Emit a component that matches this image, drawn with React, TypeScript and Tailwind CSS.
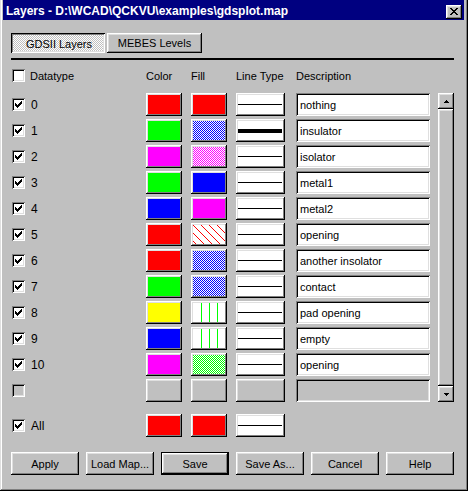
import React from "react";

const RAISED =
  "shadow-[inset_-1px_-1px_#000000,inset_1px_1px_#ffffff,inset_-2px_-2px_#808080,inset_2px_2px_#dfdfdf]";
const SUNKEN =
  "shadow-[inset_1px_1px_#808080,inset_-1px_-1px_#ffffff,inset_2px_2px_#000000,inset_-2px_-2px_#dfdfdf]";
const PRESSED =
  "shadow-[inset_1px_1px_#000000,inset_-1px_-1px_#ffffff,inset_2px_2px_#808080,inset_-2px_-2px_#dfdfdf]";

function Pixels({ rows, color = "#000" }: { rows: string[]; color?: string }) {
  const w = rows[0].length;
  const h = rows.length;
  const rects: React.ReactElement[] = [];
  rows.forEach((r, y) =>
    r.split("").forEach((c, x) => {
      if (c === "X") rects.push(<rect key={`${x}-${y}`} x={x} y={y} width={1} height={1} fill={color} />);
    })
  );
  return (
    <svg width={w} height={h} viewBox={`0 0 ${w} ${h}`} shapeRendering="crispEdges" className="block">
      {rects}
    </svg>
  );
}

const CHECK = ["......X", ".....XX", "X...XXX", "XX.XXX.", "XXXXX..", ".XXX...", "..X...."];
const CLOSE = ["XX....XX", ".XX..XX.", "..XXXX..", "...XX...", "..XXXX..", ".XX..XX.", "XX....XX"];
const UP = ["..X..", ".XXX.", "XXXXX"];
const DOWN = ["XXXXX", ".XXX.", "..X.."];

function CheckBox({ checked, disabled }: { checked: boolean; disabled?: boolean }) {
  return (
    <div className={`w-[13px] h-[13px] ${disabled ? "bg-[#c0c0c0]" : "bg-white"} ${SUNKEN} flex items-center justify-center shrink-0`}>
      {checked && <Pixels rows={CHECK} />}
    </div>
  );
}

type FillKind =
  | { t: "solid"; c: string }
  | { t: "checker"; c: string }
  | { t: "diag"; c: string }
  | { t: "vert"; c: string }
  | { t: "none" };

function FillArt({ kind, id }: { kind: FillKind; id: string }) {
  if (kind.t === "none") return <div className="w-full h-full bg-[#c0c0c0]" />;
  if (kind.t === "solid") return <div className="w-full h-full" style={{ background: kind.c }} />;
  if (kind.t === "vert")
    return (
      <svg width="32" height="19" viewBox="0 0 32 19" shapeRendering="crispEdges" className="block">
        <rect x="0" y="0" width="32" height="19" fill="#fff" />
        <rect x="8" y="0" width="1" height="19" fill={kind.c} />
        <rect x="16" y="0" width="1" height="19" fill={kind.c} />
        <rect x="24" y="0" width="1" height="19" fill={kind.c} />
      </svg>
    );
  if (kind.t === "checker")
    return (
      <svg width="32" height="19" viewBox="0 0 32 19" shapeRendering="crispEdges" className="block">
        <defs>
          <pattern id={id} width="2" height="2" patternUnits="userSpaceOnUse">
            <rect x="0" y="0" width="2" height="2" fill="#fff" />
            <rect x="0" y="0" width="1" height="1" fill={kind.c} />
            <rect x="1" y="1" width="1" height="1" fill={kind.c} />
          </pattern>
        </defs>
        <rect x="0" y="0" width="32" height="19" fill={`url(#${id})`} />
      </svg>
    );
  return (
    <svg width="32" height="19" viewBox="0 0 32 19" shapeRendering="crispEdges" className="block">
      <defs>
        <pattern id={id} width="8" height="8" patternUnits="userSpaceOnUse">
          <rect x="0" y="0" width="8" height="8" fill="#fff" />
          {[0, 1, 2, 3, 4, 5, 6, 7].map((i) => (
            <rect key={i} x={i} y={i} width="1" height="1" fill={kind.c} />
          ))}
        </pattern>
      </defs>
      <rect x="0" y="0" width="32" height="19" fill={`url(#${id})`} />
    </svg>
  );
}

function Swatch({ children, w }: { children: React.ReactNode; w: string }) {
  return <div className={`${w} h-[23px] p-[2px] bg-[#c0c0c0] ${RAISED} shrink-0`}>{children}</div>;
}

function LineBox({ thick, none }: { thick?: boolean; none?: boolean }) {
  return (
    <div className={`w-[49px] h-[23px] p-[2px] pr-[3px] ${none ? "bg-[#c0c0c0]" : "bg-white"} ${RAISED} shrink-0 flex items-center`}>
      {!none && <div className={`w-full ${thick ? "h-[4px]" : "h-[1px]"} bg-black`} />}
    </div>
  );
}

function Desc({ text, none }: { text?: string; none?: boolean }) {
  return (
    <div
      className={`w-[134px] h-[23px] ${none ? "bg-[#c0c0c0]" : "bg-white"} ${SUNKEN} shrink-0 flex items-center pl-[4px] pt-[1px] whitespace-nowrap overflow-hidden`}
    >
      {text}
    </div>
  );
}

type Row = { label: string; color: string; fill: FillKind; thick?: boolean; desc: string };

const ROWS: Row[] = [
  { label: "0", color: "#ff0000", fill: { t: "solid", c: "#ff0000" }, desc: "nothing" },
  { label: "1", color: "#00ff00", fill: { t: "checker", c: "#0000ff" }, thick: true, desc: "insulator" },
  { label: "2", color: "#ff00ff", fill: { t: "checker", c: "#ff00ff" }, desc: "isolator" },
  { label: "3", color: "#00ff00", fill: { t: "solid", c: "#0000ff" }, desc: "metal1" },
  { label: "4", color: "#0000ff", fill: { t: "solid", c: "#ff00ff" }, desc: "metal2" },
  { label: "5", color: "#ff0000", fill: { t: "diag", c: "#ff0000" }, desc: "opening" },
  { label: "6", color: "#ff0000", fill: { t: "checker", c: "#0000ff" }, desc: "another insolator" },
  { label: "7", color: "#00ff00", fill: { t: "checker", c: "#0000ff" }, desc: "contact" },
  { label: "8", color: "#ffff00", fill: { t: "vert", c: "#00ff00" }, desc: "pad opening" },
  { label: "9", color: "#0000ff", fill: { t: "vert", c: "#00ff00" }, desc: "empty" },
  { label: "10", color: "#ff00ff", fill: { t: "checker", c: "#00ff00" }, desc: "opening" },
];

function Button({ label, def }: { label: string; def?: boolean }) {
  if (def)
    return (
      <div className="w-[68px] h-[23px] border border-black shrink-0">
        <div className={`w-full h-full ${RAISED} flex items-center justify-center pt-[1px]`}>{label}</div>
      </div>
    );
  return (
    <div className={`w-[68px] h-[23px] ${RAISED} flex items-center justify-center pt-[1px] shrink-0`}>{label}</div>
  );
}

export default function App() {
  return (
    <div
      className={`w-[468px] h-[491px] bg-[#c0c0c0] text-black text-[11px] leading-none font-['Liberation_Sans',Arial,sans-serif] shadow-[inset_-1px_-1px_#000000,inset_1px_0_#dfdfdf,inset_-2px_-2px_#808080,inset_2px_0_#ffffff] pl-[3px] pr-[4px] overflow-hidden`}
    >
      {/* Title bar */}
      <div className="h-[20px] bg-[#000080] flex justify-between">
        <div className="text-white font-bold pl-[3px] pt-[5px] text-[12px] whitespace-nowrap">
          Layers - D:\WCAD\QCKVU\examples\gdsplot.map
        </div>
        <div className={`mt-[5px] mr-[2px] w-[16px] h-[14px] bg-[#c0c0c0] ${RAISED} flex items-center justify-center pb-[1px]`}>
          <Pixels rows={CLOSE} />
        </div>
      </div>

      <div className="pl-[8px] w-[451px]">
        {/* Tabs */}
        <div className="mt-[13px] flex gap-[2px]">
          <div
            className={`w-[94px] h-[20px] ${PRESSED} bg-[repeating-conic-gradient(#ffffff_0_25%,#c0c0c0_0_50%)] bg-[length:2px_2px] flex items-center justify-center pt-[2px] pl-[2px]`}
          >
            <span>GDSII Layers</span>
          </div>
          <div className={`w-[95px] h-[20px] ${RAISED} flex items-center justify-center pt-[1px]`}>MEBES Levels</div>
        </div>

        {/* Separator */}
        <div className="mt-[5px] h-[2px] bg-black w-[443px]" />

        {/* Header */}
        <div className="mt-[6px] h-[19px] flex items-center">
          <div className="w-[135px] flex items-center">
            <div className="ml-[1px]">
              <CheckBox checked={false} />
            </div>
            <span className="ml-[5px] pt-[1px]">Datatype</span>
          </div>
          <div className="w-[45px] pt-[1px]">Color</div>
          <div className="w-[45px] pt-[1px]">Fill</div>
          <div className="w-[60px] pt-[1px]">Line Type</div>
          <div className="pt-[1px]">Description</div>
        </div>

        {/* Rows + scrollbar */}
        <div className="mt-[8px] flex">
          <div className="flex flex-col gap-[3px]">
            {ROWS.map((r, i) => (
              <div key={i} className="h-[23px] flex items-center">
                <div className="w-[135px] flex items-center">
                  <div className="ml-[1px]">
                    <CheckBox checked={true} />
                  </div>
                  <span className="ml-[6px] pt-[1px] text-[12px]">{r.label}</span>
                </div>
                <Swatch w="w-[36px]">
                  <div className="w-full h-full" style={{ background: r.color }} />
                </Swatch>
                <div className="ml-[9px]">
                  <Swatch w="w-[36px]">
                    <FillArt kind={r.fill} id={`pat-${i}`} />
                  </Swatch>
                </div>
                <div className="ml-[9px]">
                  <LineBox thick={r.thick} />
                </div>
                <div className="ml-[11px]">
                  <Desc text={r.desc} />
                </div>
              </div>
            ))}
            <div className="h-[23px] flex items-center">
              <div className="w-[135px] flex items-center">
                <div className="ml-[1px]">
                  <CheckBox checked={false} disabled />
                </div>
              </div>
              <Swatch w="w-[36px]">
                <div className="w-full h-full bg-[#c0c0c0]" />
              </Swatch>
              <div className="ml-[9px]">
                <Swatch w="w-[36px]">
                  <div className="w-full h-full bg-[#c0c0c0]" />
                </Swatch>
              </div>
              <div className="ml-[9px]">
                <LineBox none />
              </div>
              <div className="ml-[11px]">
                <Desc none />
              </div>
            </div>
          </div>

          {/* Scrollbar */}
          <div className="ml-[8px] w-[16px] flex flex-col">
            <div className={`h-[16px] ${RAISED} flex items-center justify-center`}>
              <Pixels rows={UP} />
            </div>
            <div className={`flex-1 ${RAISED}`} />
            <div className={`h-[16px] ${RAISED} flex items-center justify-center`}>
              <Pixels rows={DOWN} />
            </div>
          </div>
        </div>

        {/* All row */}
        <div className="mt-[12px] h-[23px] flex items-center">
          <div className="w-[135px] flex items-center">
            <div className="ml-[1px]">
              <CheckBox checked={true} />
            </div>
            <span className="ml-[6px] pt-[1px] text-[12px]">All</span>
          </div>
          <Swatch w="w-[36px]">
            <div className="w-full h-full bg-[#ff0000]" />
          </Swatch>
          <div className="ml-[9px]">
            <Swatch w="w-[36px]">
              <div className="w-full h-full bg-[#ff0000]" />
            </Swatch>
          </div>
          <div className="ml-[9px]">
            <LineBox />
          </div>
        </div>

        {/* Buttons */}
        <div className="mt-[15px] flex gap-[7px]">
          <Button label="Apply" />
          <Button label="Load Map..." />
          <Button label="Save" def />
          <Button label="Save As..." />
          <Button label="Cancel" />
          <Button label="Help" />
        </div>
      </div>
    </div>
  );
}
